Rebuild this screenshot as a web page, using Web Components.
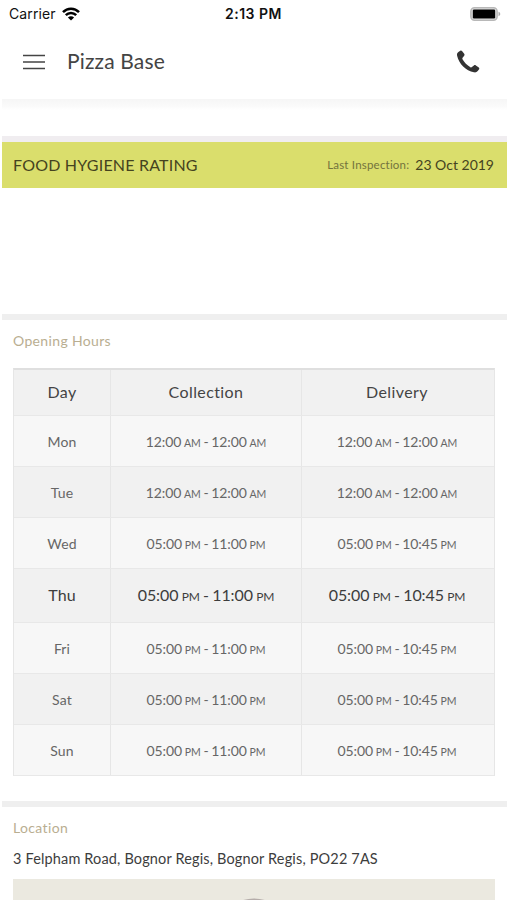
<!DOCTYPE html>
<html lang="en">
<head>
<meta charset="utf-8">
<title>Pizza Base</title>
<style>
    body {
        margin: 0;
        background: #fff;
        color: #3d3d3d;
        font-family: Lato, "Open Sans", sans-serif;
        overflow: hidden;
    }
</style>
</head>
<body>
<takeaway-info></takeaway-info>

<script>
class StatusBar extends HTMLElement {
    constructor() {
        super();
        this.attachShadow({mode: "open"}).innerHTML = `
            <style>
                :host {
                    display: grid;
                    grid-template-columns: 1fr auto 1fr;
                    align-items: center;
                    height: 27px;
                    padding: 0 6px 0 9px;
                    box-sizing: border-box;
                    font-family: Inter, sans-serif;
                    font-size: 14px;
                    color: #111;
                }
                .carrier { display: flex; align-items: center; gap: 6px; letter-spacing: 0.1px; }
                .time { margin-right: 3px; font-weight: 600; font-size: 14px; letter-spacing: 0.5px; }
                .battery { justify-self: end; }
                svg { display: block; }
            </style>
            <span class="carrier"><span>Carrier</span>
                <svg width="18" height="14" viewBox="0 0 18 14" fill="none" stroke="#000" stroke-width="2.5">
                    <path d="M1 5.2C5.4.6 12.6.6 17 5.2"/>
                    <path d="M3.8 8.2c2.9-2.9 7.5-2.9 10.4 0"/>
                    <path d="M9 13.4 5.9 10.4c1.7-1.6 4.5-1.6 6.2 0z" fill="#000" stroke="none"/>
                </svg>
            </span>
            <span class="time">2:13 PM</span>
            <svg class="battery" width="31" height="14" viewBox="0 0 31 14">
                <rect x=".9" y=".8" width="26.2" height="12.4" rx="3.6" fill="#e4e4e4" stroke="#b8b8b8" stroke-width="1.6"/>
                <rect x="2.8" y="2.6" width="22.4" height="8.8" rx="1.2" fill="#000"/>
                <path d="M28.5 4.8c2.3.7 2.3 3.7 0 4.4z" fill="#aaa"/>
            </svg>
        `;
    }
}

class AppHeader extends HTMLElement {
    constructor() {
        super();
        this.attachShadow({mode: "open"}).innerHTML = `
            <style>
                :host {
                    display: flex;
                    align-items: center;
                    height: 72px;
                    padding: 0 27px 3px 23px;
                    box-sizing: border-box;
                }
                h1 {
                    flex: 1;
                    margin: -3px 0 0 22px;
                    font-size: 21px;
                    font-weight: 400;
                    letter-spacing: 0.15px;
                    color: #444;
                }
                svg { display: block; }
            </style>
            <svg width="22" height="16" viewBox="0 0 22 16" stroke="#444" stroke-width="1.6">
                <path d="M0 1.5h22M0 8h22M0 14.5h22"/>
            </svg>
            <h1><slot></slot></h1>
            <svg width="24" height="24" viewBox="0 0 24 24" fill="#333">
                <path d="M4.3.8c.6-.4 1.2-.3 1.7.3l2.200 2.700c.5.7.5 1.300 0 2L6.600 7.800c-.4.5-.4.9-.1 1.500 1.800 3.200 4.600 6 7.900 7.900.6.3 1 .3 1.500-.1l2-1.600c.6-.5 1.300-.5 2-.1l2.900 2.100c.6.5.7 1.100.3 1.700l-1.400 1.800c-.9 1.200-2.200 1.600-3.700 1.300C9.800 20.700 3 13.800 1.100 5.700.8 4.200 1.200 3 2.400 2.100z"/>
            </svg>
        `;
    }
}

class HygieneBanner extends HTMLElement {
    constructor() {
        super();
        this.attachShadow({mode: "open"}).innerHTML = `
            <style>
                :host {
                    display: flex;
                    align-items: center;
                    height: 46px;
                    padding: 0 13px 1px 11px;
                    box-sizing: border-box;
                    background: #dade6c;
                    color: #45431f;
                }
                b { flex: 1; font-size: 16px; font-weight: 400; letter-spacing: 0.2px; }
                small { margin-right: 6px; font-size: 11.5px; color: #73733d; letter-spacing: 0.2px; }
                time { font-size: 14px; }
            </style>
            <b>FOOD HYGIENE RATING</b>
            <small>Last Inspection:</small>
            <time><slot></slot></time>
        `;
    }
}

class TimeRange extends HTMLElement {
    connectedCallback() {
        const part = (time) => {
            const [clock, half] = time.split(" ");
            return `${clock} <small>${half}</small>`;
        };
        this.attachShadow({mode: "open"}).innerHTML = `
            <style>
                :host {
                    display: block;
                    white-space: nowrap;
                    letter-spacing: -0.1px;
                    word-spacing: -0.7px;
                }
                small { font-size: 0.75em; }
            </style>
            ${part(this.getAttribute("from"))} - ${part(this.getAttribute("to"))}
        `;
    }
}

class HoursRow extends HTMLElement {
    constructor() {
        super();
        this.attachShadow({mode: "open"}).innerHTML = `
            <style>
                :host {
                    display: grid;
                    grid-template-columns: 97px 191px 1fr;
                    height: 51px;
                    box-sizing: border-box;
                    border-bottom: 1px solid #e8e8e8;
                    background: #f7f7f7;
                    color: #666;
                    font-size: 14px;
                    letter-spacing: 0.15px;
                }
                :host([shade]) { background: #f1f1f1; }
                :host([head]) { height: 46px; font-size: 16px; color: #444; letter-spacing: 0.4px; }
                :host([today]) { height: 54px; font-size: 16px; color: #3d3d3d; }
                div {
                    display: grid;
                    place-items: center;
                    border-right: 1px solid #e6e6e6;
                }
                :host([head]) div, :host([today]) div { padding-bottom: 2px; }
                div:last-child { padding-right: 2px; border: 0; }
            </style>
            <div><slot name="day"></slot></div>
            <div><slot name="collection"></slot></div>
            <div><slot name="delivery"></slot></div>
        `;
    }
}

class OpeningHours extends HTMLElement {
    connectedCallback() {
        const late = ["05:00 PM", "11:00 PM", "05:00 PM", "10:45 PM"];
        const closed = ["12:00 AM", "12:00 AM", "12:00 AM", "12:00 AM"];
        const week = [
            ["Mon", "", closed],
            ["Tue", "shade", closed],
            ["Wed", "", late],
            ["Thu", "shade today", late],
            ["Fri", "", late],
            ["Sat", "shade", late],
            ["Sun", "", late],
        ];
        this.attachShadow({mode: "open"}).innerHTML = `
            <style>
                :host {
                    display: block;
                    border: 1px solid #e6e6e6;
                    border-top: 2px solid #dfdfdf;
                    border-bottom: 0;
                }
            </style>
            <hours-row head shade>
                <span slot="day">Day</span>
                <span slot="collection">Collection</span>
                <span slot="delivery">Delivery</span>
            </hours-row>
            ${week.map(([day, flags, t]) => `
                <hours-row ${flags}>
                    <span slot="day">${day}</span>
                    <time-range slot="collection" from="${t[0]}" to="${t[1]}"></time-range>
                    <time-range slot="delivery" from="${t[2]}" to="${t[3]}"></time-range>
                </hours-row>
            `).join("")}
        `;
    }
}

class InfoSection extends HTMLElement {
    connectedCallback() {
        this.attachShadow({mode: "open"}).innerHTML = `
            <style>
                :host {
                    display: block;
                    border-top: 6px solid #efefef;
                    padding: 0 12px 0 11px;
                }
                h2 {
                    margin: 0;
                    padding-top: 12px;
                    font-size: 14px;
                    line-height: 18px;
                    font-weight: 400;
                    letter-spacing: 0.35px;
                    color: #b9ae91;
                }
            </style>
            <h2>${this.getAttribute("heading")}</h2>
            <slot></slot>
        `;
    }
}

class MapPreview extends HTMLElement {
    constructor() {
        super();
        this.attachShadow({mode: "open"}).innerHTML = `
            <style>
                :host { display: block; height: 200px; background: #ebe9e0; }
                svg { display: block; margin: 0 auto; }
            </style>
            <svg width="80" height="80" viewBox="0 0 80 80">
                <circle cx="40" cy="58.5" r="39" fill="#b5adaa"/>
            </svg>
        `;
    }
}

class TakeawayInfo extends HTMLElement {
    constructor() {
        super();
        this.attachShadow({mode: "open"}).innerHTML = `
            <style>
                :host { display: block; height: 900px; overflow: hidden; }
                main { padding-left: 2px; }
                .scroll-top {
                    height: 37px;
                    background: linear-gradient(#f6f6f6, #fafafa 7px, #fff 11px);
                }
                .rule { height: 6px; background: #f0edf0; }
                .rating { height: 126px; }
                opening-hours { margin-top: 18px; }
                .hours { height: 481px; }
                p {
                    margin: 13px 0 11px;
                    font-size: 14.5px;
                    line-height: 18px;
                    letter-spacing: 0.15px;
                }
            </style>
            <status-bar></status-bar>
            <app-header>Pizza Base</app-header>
            <main>
                <div class="scroll-top"></div>
                <div class="rule"></div>
                <hygiene-banner>23 Oct 2019</hygiene-banner>
                <div class="rating"></div>
                <info-section class="hours" heading="Opening Hours">
                    <opening-hours></opening-hours>
                </info-section>
                <info-section heading="Location">
                    <p>3 Felpham Road, Bognor Regis, Bognor Regis, PO22 7AS</p>
                    <map-preview></map-preview>
                </info-section>
            </main>
        `;
    }
}

customElements.define("status-bar", StatusBar);
customElements.define("app-header", AppHeader);
customElements.define("hygiene-banner", HygieneBanner);
customElements.define("time-range", TimeRange);
customElements.define("hours-row", HoursRow);
customElements.define("opening-hours", OpeningHours);
customElements.define("info-section", InfoSection);
customElements.define("map-preview", MapPreview);
customElements.define("takeaway-info", TakeawayInfo);
</script>
</body>
</html>
